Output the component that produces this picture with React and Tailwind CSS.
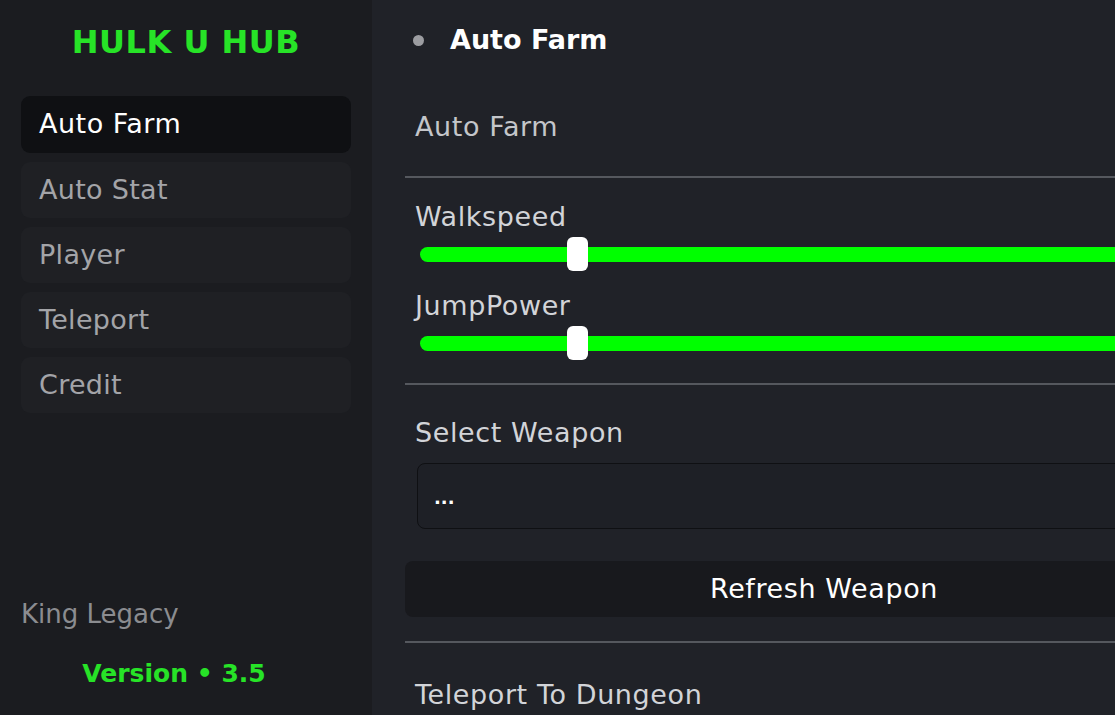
import React from "react";

const font = { fontFamily: '"DejaVu Sans", sans-serif' };

function Slider({ label, first }) {
  return (
    <div className="flex flex-col">
      <div className="text-[27px] tracking-[0.6px] leading-[34px] text-[#d2d4d8] h-[34px]">{label}</div>
      <div className={(first ? "pt-[1px] " : "") + "relative h-[40px] flex items-center pl-[5px]"}>
        <div className="h-[15px] w-full rounded-full bg-[#00ff00]" />
        <div className="absolute left-[152px] top-[3px] h-[34px] w-[21px] rounded-[6px] bg-white" />
      </div>
    </div>
  );
}

export default function App() {
  const nav = ["Auto Farm", "Auto Stat", "Player", "Teleport", "Credit"];
  return (
    <div style={font} className="w-[1115px] h-[715px] overflow-hidden flex bg-[#202228]">
      <aside className="w-[372px] shrink-0 h-full bg-[#1b1c20] flex flex-col">
        <div className="h-[82px] flex items-center justify-center pt-[2px]">
          <span className="text-[32px] font-bold text-[#27e327] tracking-[0.5px]">HULK U HUB</span>
        </div>
        <nav className="flex flex-col gap-[9px] px-[21px] mt-[14px]">
          {nav.map((n, i) => (
            <div
              key={n}
              className={
                i === 0
                  ? "h-[57px] rounded-[9px] bg-[#0f1013] flex items-center pl-[18px] text-[27px] tracking-[0.5px] text-white"
                  : "h-[56px] rounded-[9px] bg-[#1f2024] flex items-center pl-[18px] text-[27px] tracking-[0.3px] text-[#a3a4a8]"
              }
            >
              {n}
            </div>
          ))}
        </nav>
        <div className="flex-1" />
        <div className="pl-[21px] text-[26px] text-[#8b8c90] leading-[34px] mb-[26px]">King Legacy</div>
        <div className="text-center pr-[24px] text-[25px] font-bold text-[#27e327] leading-[34px] mb-[24px]">
          Version • 3.5
        </div>
      </aside>
      <main className="w-[900px] shrink-0 h-full pl-[33px] flex flex-col">
        <div className="w-[838px] flex flex-col">
          <div className="h-[80px] flex items-center pl-[8px] gap-[26px]">
            <span className="w-[11px] h-[11px] rounded-full bg-[#9c9da1]" />
            <span className="text-[27px] font-bold text-white">Auto Farm</span>
          </div>
          <div className="h-[96px] flex items-center pl-[10px] text-[27px] tracking-[0.6px] text-[#c4c6ca] pb-[2px]">Auto Farm</div>
          <div className="h-[2px] bg-[#55585e]" />
          <div className="pl-[10px] pt-[22px] flex flex-col gap-[15px]">
            <Slider label="Walkspeed" first />
            <Slider label="JumpPower" />
          </div>
          <div className="h-[2px] bg-[#55585e] mt-[20px]" />
          <div className="pl-[10px] pt-[31px] text-[27px] tracking-[0.6px] text-[#d2d4d8] leading-[34px]">Select Weapon</div>
          <div className="ml-[12px] mt-[13px] h-[66px] rounded-[8px] border border-[#0f1013] bg-[#1e2026] flex items-center pl-[16px]">
            <span className="text-[18px] font-bold text-white leading-none pt-[4px]">...</span>
          </div>
          <div className="mt-[32px] h-[56px] rounded-[8px] bg-[#18191d] flex items-center justify-center text-[27px] tracking-[0.6px] text-white">
            Refresh Weapon
          </div>
          <div className="h-[2px] bg-[#55585e] mt-[24px]" />
          <div className="pl-[10px] pt-[35px] text-[27px] tracking-[0.6px] text-[#d2d4d8] leading-[34px]">Teleport To Dungeon</div>
        </div>
      </main>
    </div>
  );
}
